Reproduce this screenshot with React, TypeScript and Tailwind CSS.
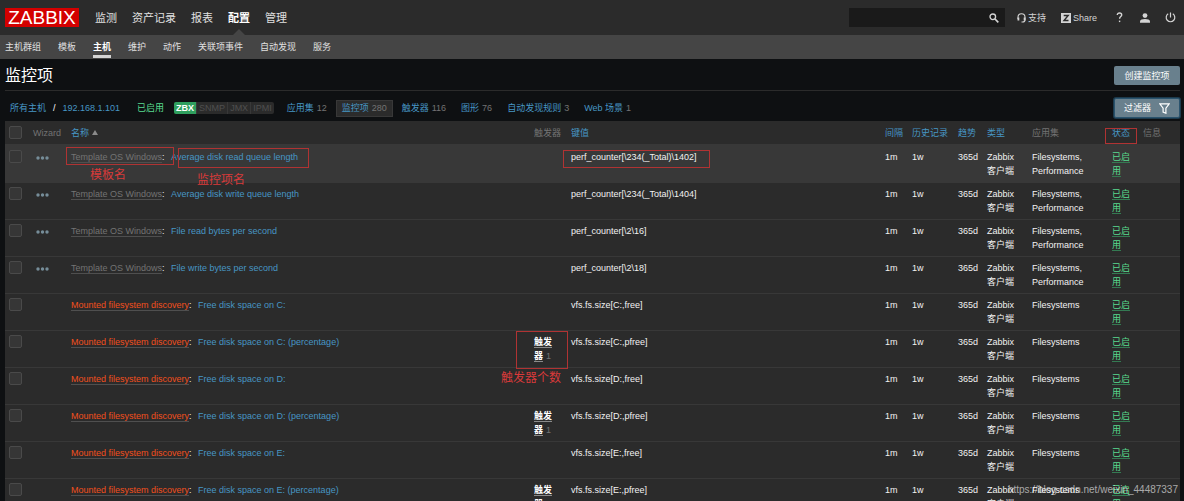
import React, { useState } from 'react'

type Item = {
  parent: string
  discovered?: boolean
  name: string
  triggers?: number
  itemKey: string
  apps: string
}

const TEMPLATE = 'Template OS Windows'
const DISCOVERY = 'Mounted filesystem discovery'

const items: Item[] = [
  { parent: TEMPLATE, name: 'Average disk read queue length', itemKey: 'perf_counter[\\234(_Total)\\1402]', apps: 'Filesystems, Performance' },
  { parent: TEMPLATE, name: 'Average disk write queue length', itemKey: 'perf_counter[\\234(_Total)\\1404]', apps: 'Filesystems, Performance' },
  { parent: TEMPLATE, name: 'File read bytes per second', itemKey: 'perf_counter[\\2\\16]', apps: 'Filesystems, Performance' },
  { parent: TEMPLATE, name: 'File write bytes per second', itemKey: 'perf_counter[\\2\\18]', apps: 'Filesystems, Performance' },
  { parent: DISCOVERY, discovered: true, name: 'Free disk space on C:', itemKey: 'vfs.fs.size[C:,free]', apps: 'Filesystems' },
  { parent: DISCOVERY, discovered: true, name: 'Free disk space on C: (percentage)', triggers: 1, itemKey: 'vfs.fs.size[C:,pfree]', apps: 'Filesystems' },
  { parent: DISCOVERY, discovered: true, name: 'Free disk space on D:', itemKey: 'vfs.fs.size[D:,free]', apps: 'Filesystems' },
  { parent: DISCOVERY, discovered: true, name: 'Free disk space on D: (percentage)', triggers: 1, itemKey: 'vfs.fs.size[D:,pfree]', apps: 'Filesystems' },
  { parent: DISCOVERY, discovered: true, name: 'Free disk space on E:', itemKey: 'vfs.fs.size[E:,free]', apps: 'Filesystems' },
  { parent: DISCOVERY, discovered: true, name: 'Free disk space on E: (percentage)', triggers: 1, itemKey: 'vfs.fs.size[E:,pfree]', apps: 'Filesystems' },
]

const mainMenu = ['监测', '资产记录', '报表', '配置', '管理']
const subMenu = ['主机群组', '模板', '主机', '维护', '动作', '关联项事件', '自动发现', '服务']

const hostTabs = [
  { label: '应用集', count: 12 },
  { label: '监控项', count: 280 },
  { label: '触发器', count: 116 },
  { label: '图形', count: 76 },
  { label: '自动发现规则', count: 3 },
  { label: 'Web 场景', count: 1 },
]

const checkboxClass = 'block w-[13px] h-[13px] appearance-none rounded-xs border border-[#4a4a4a] bg-[#363636] checked:bg-[#4796c4]'

function Header() {
  return (
    <header>
      <div className="flex items-center h-[35px] pl-[5px] pr-2 bg-[#2b2b2b]">
        <a href="#" className="flex items-center justify-center w-[74px] h-[19px] bg-[#d40000] text-white text-[19px] leading-[19px]">ZABBIX</a>
        <nav className="flex h-full ml-4 gap-[15px] text-[11px]">
          {mainMenu.map((m) => (
            <a key={m} href="#" className={`relative flex items-center ${m === '配置' ? 'text-white font-bold' : 'text-[#e0e0e0]'}`}>
              {m}
              {m === '配置' && (
                <svg className="absolute bottom-0 left-1/2 -translate-x-1/2" width="12" height="6" viewBox="0 0 12 6"><path d="M0 6 6 0l6 6z" fill="#454545" /></svg>
              )}
            </a>
          ))}
        </nav>
        <div className="flex items-center ml-auto text-[#d4d4d4]">
          <form className="flex items-center w-[156px] h-[19px] bg-[#1a1a1a]" onSubmit={(e) => e.preventDefault()}>
            <input aria-label="搜索" className="flex-1 min-w-0 h-full px-1 bg-transparent outline-none text-white" />
            <button type="submit" aria-label="搜索" className="w-[21px] flex justify-center">
              <svg width="10" height="10" viewBox="0 0 10 10" fill="none" stroke="currentColor"><circle cx="3.8" cy="3.8" r="2.8" strokeWidth="1.3" /><path d="m6 6 3.3 3.3" strokeWidth="1.7" /></svg>
            </button>
          </form>
          <a href="#" className="flex items-center gap-0.5 ml-3">
            <svg width="9" height="10" viewBox="0 0 9 10" fill="none" stroke="currentColor"><path d="M1 6V4.2a3.5 3.5 0 0 1 7 0V7c0 1.300-.8 2-2.500 2H4.500" strokeWidth="1.100" /><path d="M1.400 4.500v3M7.600 4.500v3" strokeWidth="1.800" /></svg>
            支持
          </a>
          <a href="#" className="flex items-center gap-0.5 ml-[15px]">
            <svg width="10" height="10" viewBox="0 0 10 10"><rect width="10" height="10" fill="currentColor" /><path d="M2.700 2.500h4.500L3 7.500h4.500" fill="none" stroke="#2b2b2b" strokeWidth="1.400" /></svg>
            Share
          </a>
          <button type="button" aria-label="帮助" className="flex justify-center w-3 ml-4">
            <svg width="7" height="11" viewBox="0 0 7 11" fill="none" stroke="currentColor" strokeWidth="1.400"><path d="M1.300 3C1.300 1.700 2.200 1 3.500 1s2.200.8 2.200 1.900c0 1.700-2.100 1.700-2.100 3.900" /><path d="M3.600 8.600v1.500" /></svg>
          </button>
          <button type="button" aria-label="用户" className="ml-[15px]">
            <svg width="10" height="10" viewBox="0 0 10 10" fill="currentColor"><circle cx="5" cy="2.600" r="2.400" /><path d="M0 9.800V8.200C0 6.800 2.500 6 5 6s5 .8 5 2.200v1.600z" /></svg>
          </button>
          <button type="button" aria-label="退出" className="ml-[15px]">
            <svg width="11" height="11" viewBox="0 0 11 11" fill="none" stroke="currentColor" strokeWidth="1.200"><path d="M5.500.5v5M3.200 1.800a4.300 4.300 0 1 0 4.600 0" /></svg>
          </button>
        </div>
      </div>
      <nav className="flex h-6 pb-px pl-[5px] gap-[17px] bg-[#454545] text-[#e0e0e0]">
        {subMenu.map((m) => (
          <a key={m} href="#" className={`flex items-center border-y-3 border-t-transparent ${m === '主机' ? 'text-white font-bold border-b-[#d4d4d4]' : 'border-b-transparent'}`}>{m}</a>
        ))}
      </nav>
    </header>
  )
}

function HostBar() {
  return (
    <div className="flex items-center h-[30px] pt-1 pl-[5px]">
      <a href="#" className="text-[#4796c4]">所有主机</a>
      <span className="mx-[7px] text-white">/</span>
      <a href="#" className="text-[#4796c4]">192.168.1.101</a>
      <span className="ml-[17px] text-[#59db8f]">已启用</span>
      <div className="flex ml-2.5 leading-[12px] text-[#4f4f4f] rounded-xs overflow-hidden bg-[#2b2b2b] divide-x divide-[#383838]">
        <span className="px-0.5 bg-[#2f9f5e] text-white font-bold">ZBX</span>
        <span className="px-0.5">SNMP</span>
        <span className="px-0.5">JMX</span>
        <span className="px-0.5">IPMI</span>
      </div>
      <nav className="flex items-center ml-[7px] gap-[3px]">
        {hostTabs.map((t) => (
          <a key={t.label} href="#" className={`flex items-center gap-[3px] h-[17px] px-[5px] border ${t.label === '监控项' ? 'bg-[#2b2b2b] border-[#383838]' : 'border-transparent'}`}>
            <span className="text-[#4796c4]">{t.label}</span>
            <span className="text-[#737373]">{t.count}</span>
          </a>
        ))}
      </nav>
      <button type="button" className="flex items-center justify-center gap-2 w-[66px] h-5 ml-auto rounded-xs border border-[#2a536d] ring-1 ring-[#1d3a4c] bg-[#69808d] text-white">
        过滤器
        <svg width="11" height="11" viewBox="0 0 11 11" fill="none" stroke="currentColor" strokeWidth="1.200"><path d="M.8.8h9.400L6.900 5.200v5L4.100 9V5.200z" /></svg>
      </button>
    </div>
  )
}

function ItemRow({ item, first }: { item: Item; first: boolean }) {
  const [checked, setChecked] = useState(false)
  return (
    <tr className={`h-[37px] align-top border-b border-[#383838] ${first ? 'bg-[#383838]' : ''}`}>
      <td className="p-1">
        <input type="checkbox" aria-label={item.name} checked={checked} onChange={(e) => setChecked(e.target.checked)} className={checkboxClass} />
      </td>
      <td className="py-1 px-[7px]">
        {!item.discovered && (
          <button type="button" aria-label="Wizard" className="flex items-center h-4">
            <svg width="13" height="4" viewBox="0 0 13 4" fill="#768d99"><circle cx="2" cy="2" r="1.700" /><circle cx="6.500" cy="2" r="1.700" /><circle cx="11" cy="2" r="1.700" /></svg>
          </button>
        )}
      </td>
      <td className="p-1">
        <a href="#" className={`border-b border-[#4f4f4f] ${item.discovered ? 'text-[#f24f1d]' : 'text-[#737373]'}`}>{item.parent}</a>
        {': '}
        <a href="#" className="ml-1 text-[#4796c4]">{item.name}</a>
      </td>
      <td className="p-1">
        {item.triggers && (
          <div className="w-5">
            <a href="#" className="border-b border-[#8a8a8a] text-white font-bold">触发器</a>
            <span className="ml-[3px] text-[#737373]">{item.triggers}</span>
          </div>
        )}
      </td>
      <td className="p-1">{item.itemKey}</td>
      <td className="p-1">1m</td>
      <td className="p-1">1w</td>
      <td className="p-1">365d</td>
      <td className="p-1">Zabbix 客户端</td>
      <td className="p-1">{item.apps}</td>
      <td className="p-1"><a href="#" className="text-[#59db8f] border-b border-[#347a52]">已启用</a></td>
      <td />
    </tr>
  )
}

function ItemTable() {
  return (
    <table className="w-full table-fixed border-collapse bg-[#2b2b2b] text-[#f2f2f2]">
      <colgroup>
        <col className="w-6" />
        <col className="w-[38px]" />
        <col />
        <col className="w-[37px]" />
        <col className="w-[314px]" />
        <col className="w-[27px]" />
        <col className="w-[46px]" />
        <col className="w-[29px]" />
        <col className="w-[45px]" />
        <col className="w-20" />
        <col className="w-[31px]" />
        <col className="w-[41px]" />
      </colgroup>
      <thead>
        <tr className="h-6 text-left whitespace-nowrap text-[#737373] border-b-2 border-[#383838] [&>th]:px-1 [&>th]:font-normal">
          <th><input type="checkbox" aria-label="全选" className={checkboxClass} /></th>
          <th>Wizard</th>
          <th>
            <a href="#" className="inline-flex items-center gap-[3px] text-[#4796c4]">
              名称
              <svg width="6" height="5" viewBox="0 0 6 5"><path d="M0 5 3 0l3 5z" fill="#8a8a8a" /></svg>
            </a>
          </th>
          <th>触发器</th>
          <th><a href="#" className="text-[#4796c4]">键值</a></th>
          <th><a href="#" className="text-[#4796c4]">间隔</a></th>
          <th><a href="#" className="text-[#4796c4]">历史记录</a></th>
          <th><a href="#" className="text-[#4796c4]">趋势</a></th>
          <th><a href="#" className="text-[#4796c4]">类型</a></th>
          <th>应用集</th>
          <th><a href="#" className="text-[#4796c4]">状态</a></th>
          <th>信息</th>
        </tr>
      </thead>
      <tbody>
        {items.map((item, i) => (
          <ItemRow key={item.itemKey} item={item} first={i === 0} />
        ))}
      </tbody>
    </table>
  )
}

// red marks drawn over the table
function Notes() {
  return (
    <div className="absolute inset-0 pointer-events-none text-[12px] leading-[14px] text-[#d93a3a]">
      <div className="absolute left-[66px] top-[147px] w-[108px] h-[18px] border border-[#b03333]" />
      <div className="absolute left-[178px] top-[148px] w-[131px] h-[20px] border border-[#b03333]" />
      <div className="absolute left-[563px] top-[150px] w-[147px] h-[18px] border border-[#b03333]" />
      <div className="absolute left-[1105px] top-[128px] w-[32px] h-[16px] border border-[#b03333]" />
      <div className="absolute left-[516px] top-[331px] w-[52px] h-[38px] border border-[#b03333]" />
      <span className="absolute left-[90px] top-[168px]">模板名</span>
      <span className="absolute left-[197px] top-[173px]">监控项名</span>
      <span className="absolute left-[501px] top-[371px]">触发器个数</span>
    </div>
  )
}

export default function App() {
  return (
    <div className="relative h-screen overflow-hidden bg-[#0e1012] font-['Liberation_Sans','Noto_Sans_CJK_SC',sans-serif] text-[9px] leading-[14px] text-[#f2f2f2]">
      <Header />
      <main className="pl-[5px] pr-1">
        <div className="flex items-center justify-between h-8 pt-[2px] border-b border-[#2b2b2b]">
          <h1 className="text-[16px] leading-5 text-white">监控项</h1>
          <button type="button" className="w-[66px] h-[19px] rounded-xs bg-[#69808d] text-white">创建监控项</button>
        </div>
        <HostBar />
        <ItemTable />
      </main>
      <Notes />
      <div className="absolute right-1.5 bottom-1 text-[10px] text-white/60">https://blog.csdn.net/weixin_44487337</div>
    </div>
  )
}
